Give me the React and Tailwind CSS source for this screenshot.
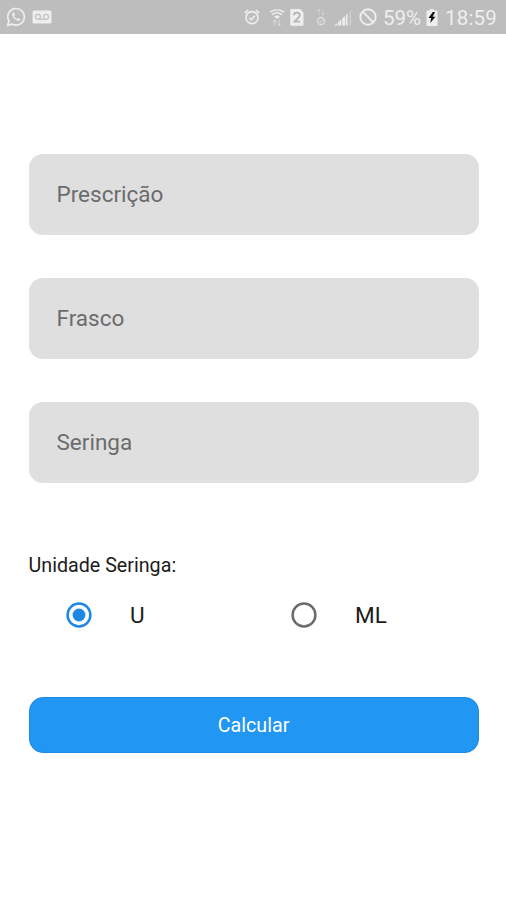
import { useState } from "react";

const FIELDS = [
  { id: "prescricao", label: "Prescrição" },
  { id: "frasco", label: "Frasco" },
  { id: "seringa", label: "Seringa" },
];

const UNITS = ["U", "ML"];

function WhatsAppIcon() {
  return (
    <svg className="ml-[6px] size-5" viewBox="0 0 20 20" fill="none" stroke="currentColor">
      <path d="M1.6 18.4 2.9 14A8.3 8.3 0 1 1 6.1 17.1Z" strokeWidth="1.7" strokeLinejoin="round" />
      <path
        d="M7.2 5.4c-1 .5-1.4 1.5-.9 2.8 1 2.7 3 4.7 5.6 5.5 1.2.3 2.2-.2 2.5-1.3l-2.2-1.3-1 1c-1.5-.6-2.5-1.6-3.1-3l.9-1-.9-2.5Z"
        fill="currentColor"
        stroke="none"
      />
    </svg>
  );
}

function VoicemailIcon() {
  return (
    <svg className="ml-[6px] h-[14px] w-5" viewBox="0 0 20 14">
      <rect x="0.5" y="0.5" width="19" height="13" rx="1.5" fill="currentColor" />
      <g fill="none" stroke="#c4c4c4" strokeWidth="1.3">
        <circle cx="6" cy="6.8" r="2.5" />
        <circle cx="14" cy="6.8" r="2.5" />
        <path d="M6 9.3h8" />
      </g>
    </svg>
  );
}

function AlarmIcon() {
  return (
    <svg className="size-4" viewBox="0 0 16 16" fill="none" stroke="currentColor">
      <circle cx="8" cy="8.7" r="6" strokeWidth="1.7" />
      <path d="M.8 4 4 1.2M15.2 4 12 1.2" strokeWidth="1.7" />
      <path d="m5.2 8.8 2 2 3.6-4" strokeWidth="1.6" />
    </svg>
  );
}

function WifiIcon() {
  return (
    <svg className="ml-[9px] h-[17px] w-4" viewBox="0 0 16 17" fill="none" stroke="currentColor">
      <path d="M1 3.2c4.2-3 9.8-3 14 0M3 5.6c3-2.2 7-2.2 10 0" strokeWidth="1.5" />
      <path d="M5 7.3c2-1.2 4-1.2 6 0L8 10Z" fill="currentColor" stroke="none" />
      <path d="M5.8 16.5V11M4 13l1.8-2 1.8 2M10.2 10.5v6M8.4 14.5l1.8 2 1.8-2" strokeWidth="1" opacity=".6" />
    </svg>
  );
}

function SimIcon() {
  return (
    <svg className="ml-[5px] h-[17px] w-[14px]" viewBox="0 0 14 17">
      <path
        d="M1.5 0H10l3.5 3.5v12a1.3 1.3 0 0 1-1.3 1.3H1.5A1.3 1.3 0 0 1 .2 15.5v-14A1.3 1.3 0 0 1 1.5 0Z"
        fill="currentColor"
      />
      <path
        d="M4 6.2C4 2.8 9.8 2.8 9.8 6.2c0 2-3.4 3.8-5.4 6.5h5.8"
        fill="none"
        stroke="#b3b3b3"
        strokeWidth="1.8"
      />
    </svg>
  );
}

function DataIcon() {
  return (
    <svg className="ml-[12px] h-[18px] w-[10px]" viewBox="0 0 10 18" fill="none" stroke="currentColor">
      <path d="M3 1v6M7 1v6M1.8 3 3 1l1.2 2M5.8 5 7 7l1.2-2" opacity=".35" />
      <circle cx="5" cy="13" r="3.5" strokeWidth="1.3" opacity=".7" />
      <path d="m3.2 13 1.5 1.3 2.3-2.6" strokeWidth="1" opacity=".7" />
    </svg>
  );
}

function SignalIcon() {
  return (
    <svg className="ml-[8px] h-[17px] w-[18px]" viewBox="0 0 18 17" fill="currentColor">
      <path d="M0 16.5 3.2 14v2.5ZM4.2 13l3-2.4v5.9h-3zM8.2 9.5l3-2.5v9.5h-3zM12 6l1.5-1.5v12H12z" />
      <path d="M15.5 2.5 17 1v15.5h-1.5z" opacity=".4" />
    </svg>
  );
}

function BlockedIcon() {
  return (
    <svg className="ml-[7px] size-[18px]" viewBox="0 0 18 18" fill="none" stroke="currentColor" strokeWidth="1.9">
      <circle cx="9" cy="9" r="7.7" />
      <path d="m3.7 3.7 10.6 10.6" />
    </svg>
  );
}

function BatteryIcon() {
  return (
    <svg className="ml-[4px] h-[17px] w-3" viewBox="0 0 12 17">
      <path d="M4 0h4v1.5h3.5V17H.5V1.5H4Z" fill="currentColor" />
      <path d="M6.8 3 2.5 9h2.7l-1 5L9.5 7.7H6.7L9 3Z" fill="#111" />
    </svg>
  );
}

function StatusBar() {
  return (
    <header className="flex h-[34px] items-center bg-[#bdbdbd] text-[#eeeeee]">
      <WhatsAppIcon />
      <VoicemailIcon />
      <div className="ml-auto flex items-center pr-[9px]">
        <AlarmIcon />
        <WifiIcon />
        <SimIcon />
        <DataIcon />
        <SignalIcon />
        <BlockedIcon />
        <span className="ml-[6px] w-[39px] pt-px text-[20.5px] leading-6 whitespace-nowrap">59%</span>
        <BatteryIcon />
        <span className="ml-[7px] w-[52px] pt-px text-[20.5px] leading-6 tracking-[0.2px] whitespace-nowrap">18:59</span>
      </div>
    </header>
  );
}

export default function App() {
  const [values, setValues] = useState({});
  const [unit, setUnit] = useState("U");

  return (
    <div className="h-screen overflow-hidden bg-white font-['Roboto',sans-serif]">
      <StatusBar />

      <form className="pt-[120px] pr-[27.5px] pl-[28.5px]" onSubmit={(e) => e.preventDefault()}>
        <div className="flex flex-col gap-[43px]">
          {FIELDS.map((field) => (
            <input
              key={field.id}
              aria-label={field.label}
              placeholder={field.label}
              value={values[field.id] ?? ""}
              onChange={(e) => setValues({ ...values, [field.id]: e.target.value })}
              className="h-[81px] w-full rounded-[14px] bg-[#dfdfdf] px-[28px] pb-[2px] text-[22.5px] text-black outline-none placeholder:text-[#6c6c6c]"
            />
          ))}
        </div>

        <p className="mt-[71px] text-[19.7px] leading-6 text-[#1c1c1c]">Unidade Seringa:</p>

        <div className="mt-[20px] flex">
          {UNITS.map((name) => (
            <label key={name} className="flex h-[34px] w-1/2 items-center pl-[37.5px]">
              <input
                type="radio"
                name="unit"
                className="sr-only"
                checked={unit === name}
                onChange={() => setUnit(name)}
              />
              <svg
                className={unit === name ? "size-[26px] text-[#1e88e5]" : "size-[26px] text-[#6b6b6b]"}
                viewBox="0 0 26 26"
              >
                <circle cx="13" cy="13" r="11.4" fill="none" stroke="currentColor" strokeWidth="2.5" />
                {unit === name && <circle cx="13" cy="13" r="6.4" fill="currentColor" />}
              </svg>
              <span className="ml-[38px] pt-px text-[22.5px] text-[#1c1c1c]">{name}</span>
            </label>
          ))}
        </div>

        <button
          type="submit"
          className="mt-[65px] h-14 w-full rounded-[14px] border border-[#1a8ae6] bg-[#2196f3] pt-[2px] text-[19.7px] text-white"
        >
          Calcular
        </button>
      </form>
    </div>
  );
}
